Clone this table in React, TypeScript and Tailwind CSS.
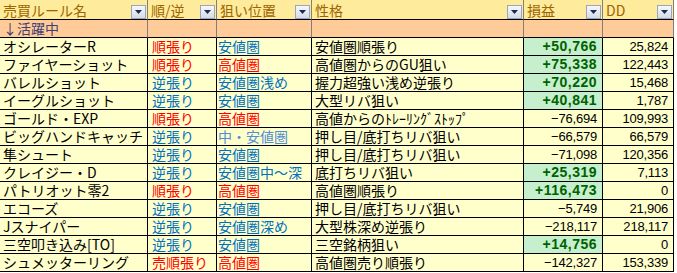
import React from "react";

const RED = "text-[#ff0000]";
const BLUE = "text-[#0070c0]";
const LBLUE = "text-[#538dd5]";

type Row = {
  name: string;
  dir: string;
  dirColor: string;
  pos: string;
  posColor: string;
  note: string;
  pl: string;
  good: boolean;
  dd: string;
};

const rows: Row[] = [
  { name: "オシレーターR", dir: "順張り", dirColor: RED, pos: "安値圏", posColor: BLUE, note: "安値圏順張り", pl: "+50,766", good: true, dd: "25,824" },
  { name: "ファイヤーショット", dir: "順張り", dirColor: RED, pos: "高値圏", posColor: RED, note: "高値圏からのGU狙い", pl: "+75,338", good: true, dd: "122,443" },
  { name: "バレルショット", dir: "逆張り", dirColor: BLUE, pos: "安値圏浅め", posColor: BLUE, note: "握力超強い浅め逆張り", pl: "+70,220", good: true, dd: "15,468" },
  { name: "イーグルショット", dir: "逆張り", dirColor: BLUE, pos: "安値圏", posColor: BLUE, note: "大型リバ狙い", pl: "+40,841", good: true, dd: "1,787" },
  { name: "ゴールド・EXP", dir: "順張り", dirColor: RED, pos: "高値圏", posColor: RED, note: "高値からのﾄﾚｰﾘﾝｸﾞｽﾄｯﾌﾟ", pl: "−76,694", good: false, dd: "109,993" },
  { name: "ビッグハンドキャッチ", dir: "逆張り", dirColor: BLUE, pos: "中・安値圏", posColor: LBLUE, note: "押し目/底打ちリバ狙い", pl: "−66,579", good: false, dd: "66,579" },
  { name: "隼シュート", dir: "逆張り", dirColor: BLUE, pos: "安値圏", posColor: BLUE, note: "押し目/底打ちリバ狙い", pl: "−71,098", good: false, dd: "120,356" },
  { name: "クレイジー・D", dir: "逆張り", dirColor: BLUE, pos: "安値圏中～深", posColor: BLUE, note: "底打ちリバ狙い", pl: "+25,319", good: true, dd: "7,113" },
  { name: "パトリオット零2", dir: "順張り", dirColor: RED, pos: "高値圏", posColor: RED, note: "高値圏順張り", pl: "+116,473", good: true, dd: "0" },
  { name: "エコーズ", dir: "逆張り", dirColor: BLUE, pos: "安値圏", posColor: BLUE, note: "押し目/底打ちリバ狙い", pl: "−5,749", good: false, dd: "21,906" },
  { name: "Jスナイパー", dir: "逆張り", dirColor: BLUE, pos: "安値圏深め", posColor: BLUE, note: "大型株深め逆張り", pl: "−218,117", good: false, dd: "218,117" },
  { name: "三空叩き込み[TO]", dir: "逆張り", dirColor: BLUE, pos: "安値圏", posColor: BLUE, note: "三空銘柄狙い", pl: "+14,756", good: true, dd: "0" },
  { name: "シュメッターリング", dir: "売順張り", dirColor: RED, pos: "高値圏", posColor: RED, note: "高値圏売り順張り", pl: "−142,327", good: false, dd: "153,339" },
];

const headers = ["売買ルール名", "順/逆", "狙い位置", "性格", "損益", "DD"];

function FilterButton() {
  return (
    <div className="mr-[1px] flex h-[14px] w-[15px] shrink-0 items-center justify-center border border-[#9ba6bc] bg-gradient-to-b from-[#f6f8fc] to-[#d3dbe9]">
      <svg width="7" height="4" viewBox="0 0 7 4">
        <path d="M0 0 L7 0 L3.5 4 Z" fill="#1d2a4d" />
      </svg>
    </div>
  );
}

function Cell({ className, children }: { className?: string; children?: React.ReactNode }) {
  return (
    <div className={"h-[18px] overflow-x-clip whitespace-nowrap border-r border-b border-black leading-[17px] " + (className ?? "")}>
      {children}
    </div>
  );
}

export default function App() {
  return (
    <div className="h-[273px] w-[677px] bg-white font-['Noto_Sans_CJK_JP',sans-serif] text-[14px] text-black">
      <div className="grid grid-cols-[148px_69px_95px_212px_79px_71px]">
        {headers.map((h) => (
          <div
            key={h}
            className="flex h-[20px] items-end justify-between border-r border-b border-r-[#7f7f7f] border-b-black bg-[#ffeb9c] pl-[3px] leading-[17px] text-[#9c6500]"
          >
            <span>{h}</span>
            <FilterButton />
          </div>
        ))}

        <div className="h-[18px] border-r border-b border-r-[#7f7f7f] border-b-black bg-[#ffcc99] pl-[3px] leading-[17px] text-[#3f3f76]">
          ↓活躍中
        </div>
        {[0, 1, 2, 3, 4].map((i) => (
          <div key={i} className="h-[18px] border-r border-b border-r-[#7f7f7f] border-b-black bg-[#ffcc99]" />
        ))}

        {rows.map((r) => (
          <React.Fragment key={r.name}>
            <Cell className="bg-[#ffffcc] pl-[3px]">{r.name}</Cell>
            <Cell className={"bg-[#ffffcc] pl-[4px] " + r.dirColor}>{r.dir}</Cell>
            <Cell className={"bg-[#ffffcc] pl-[1px] " + r.posColor}>{r.pos}</Cell>
            <Cell className="bg-[#ffffcc] pl-[3px]">{r.note}</Cell>
            {r.good ? (
              <Cell className="bg-[#c6efce] pr-[5px] text-right font-['Liberation_Sans',sans-serif] text-[14px] font-bold tracking-[0.5px] text-[#006100]">
                {r.pl}
              </Cell>
            ) : (
              <Cell className="bg-[#ffffcc] pr-[5px] text-right font-['Liberation_Sans',sans-serif] text-[13px] tracking-[-0.2px]">
                {r.pl}
              </Cell>
            )}
            <Cell className="bg-[#ffffcc] pr-[5px] text-right font-['Liberation_Sans',sans-serif] text-[13px] tracking-[-0.2px]">
              {r.dd}
            </Cell>
          </React.Fragment>
        ))}
      </div>
    </div>
  );
}
